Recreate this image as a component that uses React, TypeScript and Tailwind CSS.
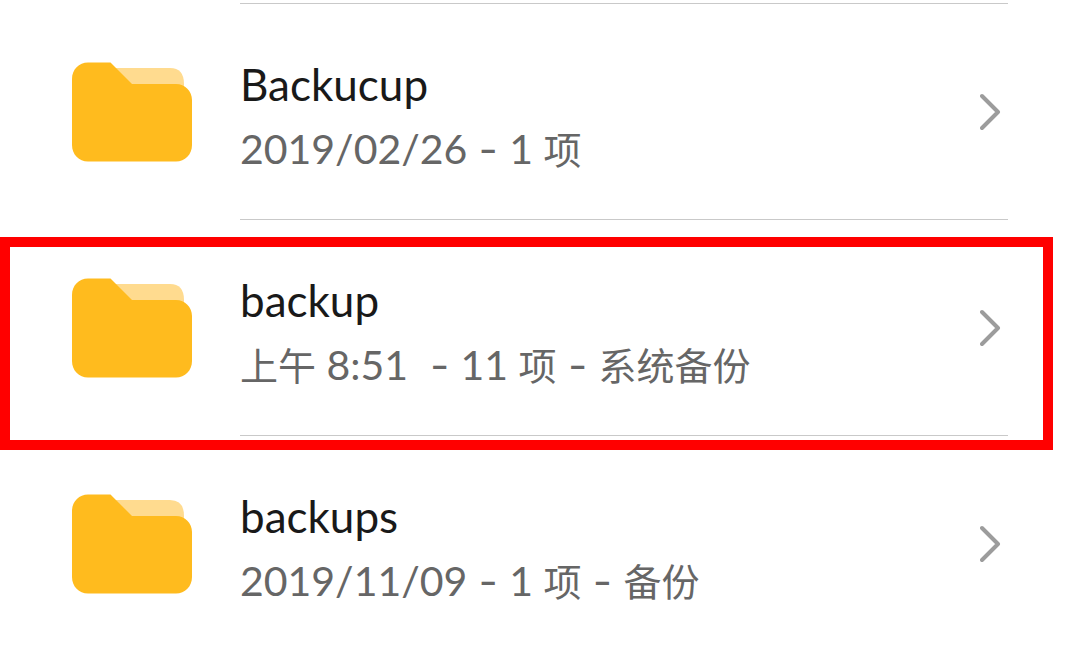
import { Fragment } from "react";

type Entry = { name: string; parts: string[]; highlighted?: boolean };

const entries: Entry[] = [
  { name: "Backucup", parts: ["2019/02/26", "1 项"] },
  { name: "backup", parts: ["上午 8:51 ", "11 项", "系统备份"], highlighted: true },
  { name: "backups", parts: ["2019/11/09", "1 项", "备份"] },
];

function FolderIcon() {
  return (
    <svg className="h-[100px] w-[120px] shrink-0" viewBox="0 0 120 100" aria-hidden="true">
      <path d="M38 6H98Q112 6 112 22V40H60Z" fill="#ffdb8f" />
      <path
        d="M16 0.5H38.500L60 22H104C113 22 120 29 120 38V83C120 92.500 113 99.500 104 99.500H16C7 99.500 0 92.500 0 83V17C0 7.500 7 0.500 16 0.500Z"
        fill="#ffbb1e"
      />
    </svg>
  );
}

function Chevron() {
  return (
    <svg className="h-10 w-6 shrink-0" viewBox="0 0 24 40" fill="none" aria-hidden="true">
      <path
        d="M2 4L18 20L2 36"
        stroke="#9c9c9c"
        strokeWidth="4"
        strokeLinecap="round"
        strokeLinejoin="round"
      />
    </svg>
  );
}

/* Chinese runs are set slightly smaller than the figures beside them. */
function Mixed({ text }: { text: string }) {
  return (
    <>
      {text.split(/([\u4e00-\u9fff]+)/).map((run, i) =>
        i % 2 === 1 ? (
          <span key={i} className="text-[38px]">
            {run}
          </span>
        ) : (
          run
        ),
      )}
    </>
  );
}

function FolderRow({ entry }: { entry: Entry }) {
  return (
    <li className="group relative">
      <a href="#" className="flex items-stretch gap-12 pr-[72px] pl-[72px]">
        <span className="pt-[58px]">
          <FolderIcon />
        </span>
        <span className="flex min-w-0 flex-1 items-start border-b border-[#c9c9c9] pt-[50px] pb-9 group-last:border-b-0 group-last:pb-7">
          <span className="min-w-0 flex-1">
            <span className="block text-[44px] leading-[60px] text-[#191919]">{entry.name}</span>
            <span className="block h-[69px] text-[41px] leading-[69px] whitespace-pre text-[#666666]">
              {entry.parts.map((part, i) => (
                <Fragment key={part}>
                  {i > 0 && <span className="font-['Inter',sans-serif]"> - </span>}
                  <Mixed text={part} />
                </Fragment>
              ))}
            </span>
          </span>
          <span className="pt-[38px] pr-1">
            <Chevron />
          </span>
        </span>
      </a>
      {entry.highlighted && (
        <div className="pointer-events-none absolute top-[17px] right-[27px] -bottom-[14px] left-0 z-10 border-[10px] border-[#ff0000]" />
      )}
    </li>
  );
}

export default function App() {
  return (
    <main className="bg-white font-['Lato','Noto_Sans_CJK_SC',sans-serif]">
      <div className="mr-[72px] ml-[240px] h-1 border-b border-[#c9c9c9]" />
      <ul>
        {entries.map((entry) => (
          <FolderRow key={entry.name} entry={entry} />
        ))}
      </ul>
    </main>
  );
}
